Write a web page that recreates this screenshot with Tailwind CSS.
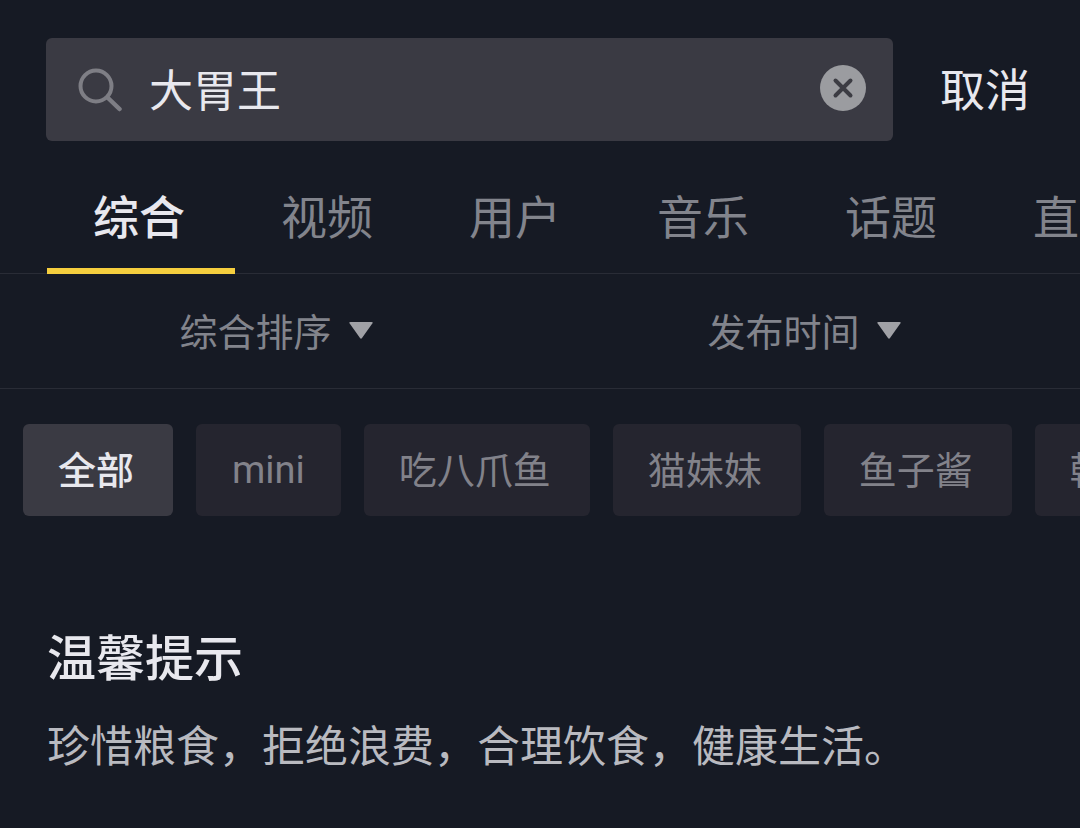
<!DOCTYPE html>
<html lang="zh-CN">
<head>
<meta charset="utf-8">
<meta name="viewport" content="width=device-width, initial-scale=1">
<title>搜索</title>
<script src="https://cdn.jsdelivr.net/npm/@tailwindcss/browser@4"></script>
</head>
<body class="min-h-screen overflow-x-hidden bg-[#161a24] font-['Noto_Sans_CJK_SC',sans-serif] text-[#e8e8ee]">
  <header>
    <form class="flex items-center gap-[47px] pt-[38px] pr-[50px] pl-[46px]" onsubmit="return false">
      <div class="flex h-[103px] min-w-0 flex-1 items-center rounded-md bg-[#3a3a43] pr-[27px] pl-8">
        <svg class="h-11 w-11 shrink-0 text-[#7e7e85]" viewBox="0 0 44 44" fill="none" stroke="currentColor" stroke-width="4" stroke-linecap="round" aria-hidden="true">
          <circle cx="18" cy="18" r="15.5"/>
          <path d="M29.5 29.5 41.5 41" stroke-width="4.5"/>
        </svg>
        <input type="text" aria-label="搜索" value="大胃王" class="ml-[27px] h-16 min-w-0 flex-1 bg-transparent pb-1 text-[44px] leading-[60px] outline-none">
        <button type="button" aria-label="清除" class="shrink-0 pb-1">
          <svg class="h-[46px] w-[46px]" viewBox="0 0 46 46" fill="none" aria-hidden="true">
            <circle cx="23" cy="23" r="23" fill="#9b9ca0"/>
            <path d="M15.5 15.5 30.5 30.5M30.5 15.5 15.5 30.5" stroke="#3c3c43" stroke-width="4" stroke-linecap="round"/>
          </svg>
        </button>
      </div>
      <button type="button" class="shrink-0 pb-1 text-[45px] leading-[64px]">取消</button>
    </form>
    <nav class="mt-[19px] flex overflow-hidden pl-[47px] text-[46px] leading-[64px] text-[#82848c] shadow-[inset_0_-1px_0_#292c36]">
      <a href="#" aria-current="page" class="w-[188px] shrink-0 border-b-6 border-[#f5ce3e] pt-[22px] pr-1 pb-[22px] text-center font-medium text-[#e8e8ee]">综合</a>
      <a href="#" class="w-[188px] shrink-0 pt-[22px] pr-1 text-center">视频</a>
      <a href="#" class="w-[188px] shrink-0 pt-[22px] pr-1 text-center">用户</a>
      <a href="#" class="w-[188px] shrink-0 pt-[22px] pr-1 text-center">音乐</a>
      <a href="#" class="w-[188px] shrink-0 pt-[22px] pr-1 text-center">话题</a>
      <a href="#" class="w-[188px] shrink-0 pt-[22px] pr-1 text-center">直播</a>
    </nav>
  </header>
  <div class="grid grid-cols-2 border-b border-[#292c36] px-3 pt-7 pb-[30px] text-[38px] leading-[56px] text-[#82848c]">
    <label class="flex items-center justify-center gap-4">
      <select aria-label="排序方式" class="h-14 appearance-none bg-transparent outline-none"><option>综合排序</option></select>
      <svg class="pointer-events-none h-[17px] w-6" viewBox="0 0 24 17" fill="#a0a1a6" aria-hidden="true"><path d="M1.5 0h21q2 0 .8 1.6L13 16q-1 1.3-2 0L.7 1.6Q-.5 0 1.5 0Z"/></svg>
    </label>
    <label class="flex items-center justify-center gap-4">
      <select aria-label="发布时间" class="h-14 appearance-none bg-transparent outline-none"><option>发布时间</option></select>
      <svg class="pointer-events-none h-[17px] w-6" viewBox="0 0 24 17" fill="#a0a1a6" aria-hidden="true"><path d="M1.5 0h21q2 0 .8 1.6L13 16q-1 1.3-2 0L.7 1.6Q-.5 0 1.5 0Z"/></svg>
    </label>
  </div>
  <div class="flex gap-[23px] overflow-hidden pt-[35px] pl-[23px] text-[38px] leading-[56px] text-[#82828a]">
    <button type="button" class="shrink-0 rounded-md bg-[#3a3a43] pr-[39px] pl-[35px] pt-4 pb-5 font-medium text-[#e8e8ee]">全部</button>
    <button type="button" class="shrink-0 rounded-md bg-[#25252f] px-9 pt-[18px] pb-[18px] font-[Roboto,sans-serif]">mini</button>
    <button type="button" class="shrink-0 rounded-md bg-[#25252f] pr-[39px] pl-[35px] pt-4 pb-5">吃八爪鱼</button>
    <button type="button" class="shrink-0 rounded-md bg-[#25252f] pr-[39px] pl-[35px] pt-4 pb-5">猫妹妹</button>
    <button type="button" class="shrink-0 rounded-md bg-[#25252f] pr-[39px] pl-[35px] pt-4 pb-5">鱼子酱</button>
    <button type="button" class="shrink-0 rounded-md bg-[#25252f] pr-[39px] pl-[35px] pt-4 pb-5">韩国</button>
  </div>
  <main class="px-[47px] pt-[107px] pb-12">
    <h1 class="text-[49px] leading-[64px] font-medium">温馨提示</h1>
    <p class="mt-6 text-[43px] leading-[64px] text-[#b9bac0]">珍惜粮食，拒绝浪费，合理饮食，健康生活。</p>
  </main>
</body>
</html>
